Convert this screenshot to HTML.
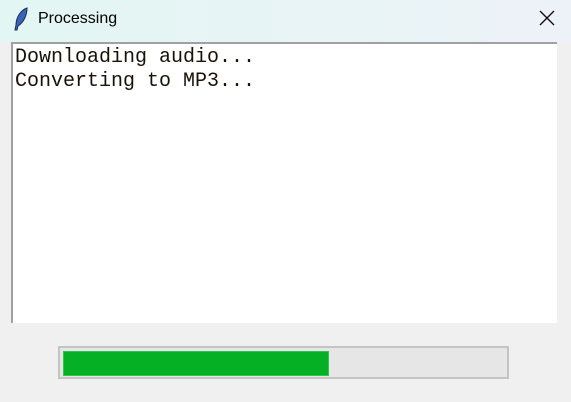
<!DOCTYPE html>
<html><head><style>
body{margin:0;width:571px;height:402px;background:#f0f0f0;position:relative;overflow:hidden;font-family:"Liberation Sans",sans-serif}
.tb{position:absolute;left:0;top:0;width:571px;height:42px;background:linear-gradient(90deg,#e2f6f3,#edf2f8)}
.title{position:absolute;left:38px;top:10px;font-size:16px;color:#000}
.ta{position:absolute;left:11px;top:42px;width:546px;height:281px;background:#fff;border-left:2px solid #a0a0a0;border-top:2px solid #a0a0a0;box-sizing:border-box}
.txt{position:absolute;left:15px;top:46px;font-family:"Liberation Mono",monospace;font-size:20px;line-height:24px;color:#1a1208;white-space:pre}
.pb{position:absolute;left:58px;top:346px;width:451px;height:33px;box-sizing:border-box;border:2px solid #c4c4c4;background:#e6e6e6}
.fill{position:absolute;left:3px;top:3px;width:266px;height:25px;background:#06b025;border:1px solid #2fc44a;box-sizing:border-box}
</style></head><body>
<div class="tb"></div>
<svg style="position:absolute;left:13px;top:7px" width="16" height="24" viewBox="0 0 16 24"><path d="M14 1 C8 3 3 10 3 18 L2 23 L4 23 L5 19 C11 15 14 8 14 1Z" fill="#3a63b8" stroke="#1d2c55" stroke-width="1"/></svg>
<div class="title">Processing</div>
<svg style="position:absolute;left:539px;top:10px" width="16" height="16"><path d="M1 1L15 15M15 1L1 15" stroke="#111" stroke-width="1.4"/></svg>
<div class="ta"></div>
<div class="txt">Downloading audio...
Converting to MP3...</div>
<div class="pb"><div class="fill"></div></div>
</body></html>
